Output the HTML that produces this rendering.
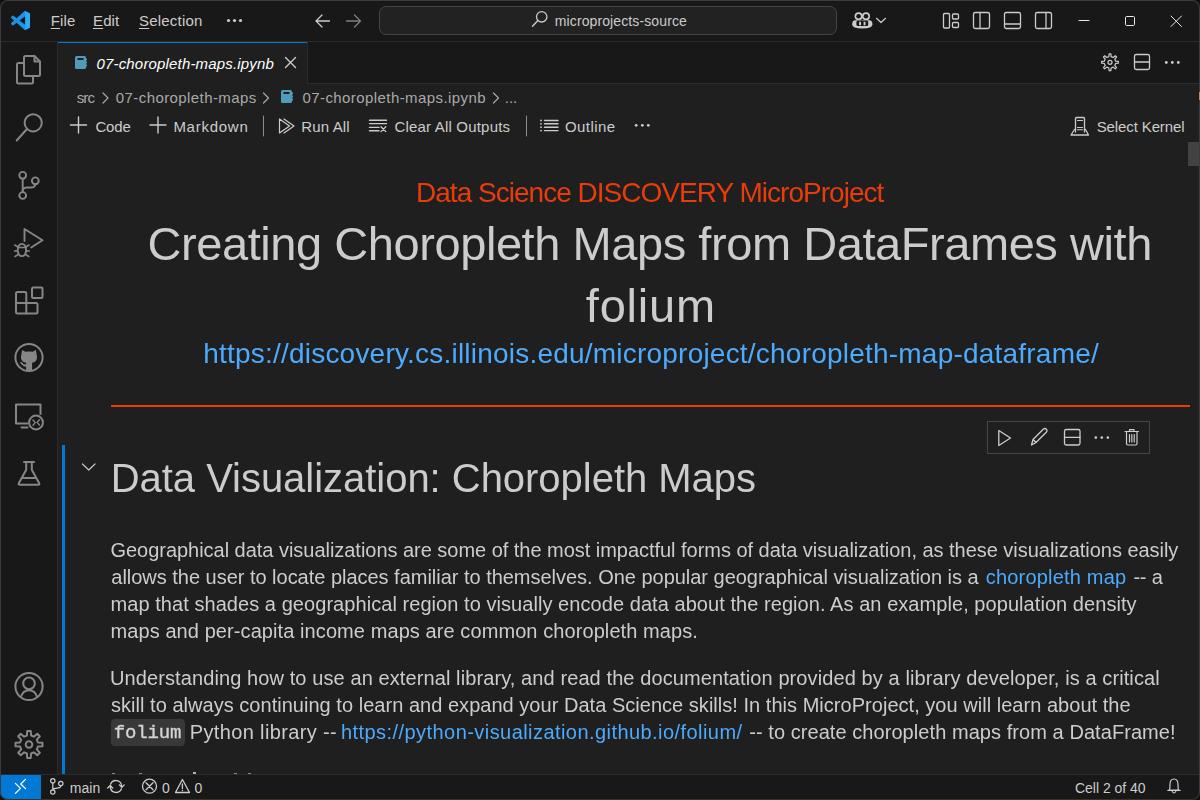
<!DOCTYPE html>
<html><head><meta charset="utf-8">
<style>
html,body{margin:0;padding:0;}
body{width:1200px;height:800px;overflow:hidden;background:#000;position:relative;font-family:"Liberation Sans",sans-serif;}
.t{position:absolute;white-space:nowrap;line-height:1;}
.t u{text-decoration:underline;text-decoration-thickness:1px;text-underline-offset:2px;}
.r{position:absolute;}
</style></head><body>
<div class="r" style="left:0;top:0;width:1200px;height:800px;background:#1f1f1f;"></div>
<!-- title bar -->
<div class="r" style="left:0;top:0;width:1200px;height:41px;background:#181818;"></div>
<div class="r" style="left:0;top:41px;width:1200px;height:1px;background:#2b2b2b;"></div>
<div class="r" style="left:379px;top:6px;width:458px;height:29px;background:#222222;border:1px solid #444444;border-radius:7px;box-sizing:border-box;"></div>
<!-- activity bar -->
<div class="r" style="left:0;top:42px;width:57px;height:732px;background:#181818;"></div>
<div class="r" style="left:57px;top:42px;width:1px;height:732px;background:#2b2b2b;"></div>
<!-- tab bar -->
<div class="r" style="left:58px;top:42px;width:1142px;height:42px;background:#181818;"></div>
<div class="r" style="left:58px;top:42px;width:249px;height:42px;background:#1f1f1f;border-top:1px solid #0078d4;box-sizing:border-box;"></div>
<div class="r" style="left:307px;top:42px;width:1px;height:42px;background:#2b2b2b;"></div>
<div class="r" style="left:308px;top:83px;width:892px;height:1px;background:#2b2b2b;"></div>
<!-- notebook content -->
<div class="r" style="left:58px;top:142px;width:1142px;height:632px;overflow:hidden;will-change:transform;">
<div class="r" style="left:53px;top:263px;width:1079px;height:2px;background:#ee3c00;"></div>
<div class="r" style="left:53px;top:577px;width:74px;height:27px;background:#383838;border-radius:4px;"></div>
<div class="t" style='left:358.00px;top:36.80px;font-size:28px;color:#e83c0a;letter-spacing:-0.980px;'>Data Science DISCOVERY MicroProject</div>
<div class="t" style='left:89.60px;top:78.21px;font-size:47px;color:#cccccc;letter-spacing:-0.437px;'>Creating Choropleth Maps from DataFrames with</div>
<div class="t" style='left:527.80px;top:140.21px;font-size:47px;color:#cccccc;letter-spacing:0.796px;'>folium</div>
<div class="t" style='left:145.20px;top:198.30px;font-size:28px;color:#4daafc;letter-spacing:0.215px;'>https://discovery.cs.illinois.edu/microproject/choropleth-map-dataframe/</div>
<div class="t" style='left:52.70px;top:316.14px;font-size:40px;color:#cccccc;letter-spacing:-0.029px;'>Data Visualization: Choropleth Maps</div>
<div class="t" style='left:52.50px;top:398.07px;font-size:20px;color:#cccccc;letter-spacing:-0.031px;'>Geographical data visualizations are some of the most impactful forms of data visualization, as these visualizations easily</div>
<div class="t" style='left:53.30px;top:425.07px;font-size:20px;color:#cccccc;letter-spacing:-0.020px;'>allows the user to locate places familiar to themselves. One popular geographical visualization is a</div>
<div class="t" style='left:927.70px;top:425.07px;font-size:20px;color:#4daafc;letter-spacing:0.197px;'>choropleth map</div>
<div class="t" style='left:1075.40px;top:425.07px;font-size:20px;color:#cccccc;letter-spacing:-0.192px;'>-- a</div>
<div class="t" style='left:52.50px;top:452.07px;font-size:20px;color:#cccccc;letter-spacing:0.058px;'>map that shades a geographical region to visually encode data about the region. As an example, population density</div>
<div class="t" style='left:52.50px;top:479.07px;font-size:20px;color:#cccccc;letter-spacing:0.084px;'>maps and per-capita income maps are common choropleth maps.</div>
<div class="t" style='left:52.00px;top:526.07px;font-size:20px;color:#cccccc;letter-spacing:0.099px;'>Understanding how to use an external library, and read the documentation provided by a library developer, is a critical</div>
<div class="t" style='left:53.00px;top:553.07px;font-size:20px;color:#cccccc;letter-spacing:0.030px;'>skill to always continuing to learn and expand your Data Science skills! In this MicroProject, you will learn about the</div>
<div class="t" style='left:55.80px;top:582.44px;font-size:19px;color:#d4d4d4;letter-spacing:-0.162px;font-family:"Liberation Mono";-webkit-text-stroke:0.35px #d4d4d4;'>folium</div>
<div class="t" style='left:131.80px;top:580.07px;font-size:20px;color:#cccccc;letter-spacing:0.357px;'>Python library --</div>
<div class="t" style='left:283.00px;top:580.07px;font-size:20px;color:#4daafc;letter-spacing:0.439px;'>https://python-visualization.github.io/folium/</div>
<div class="t" style='left:691.20px;top:580.07px;font-size:20px;color:#cccccc;letter-spacing:0.064px;'>-- to create choropleth maps from a DataFrame!</div>

</div>
<div class="r" style="left:62px;top:445px;width:3px;height:329px;background:#0078d4;"></div>
<div class="r" style="left:987px;top:421px;width:163px;height:33px;border:1px solid #454545;box-sizing:border-box;background:#1f1f1f;"></div>
<div class="r" style="left:1188px;top:142px;width:12px;height:24px;background:#424242;"></div>
<!-- status bar -->
<div class="r" style="left:0;top:774px;width:1200px;height:26px;background:#181818;border-top:1px solid #2b2b2b;box-sizing:border-box;"></div>
<div class="r" style="left:0;top:775px;width:41px;height:25px;background:#0078d4;"></div>
<div class="t" style='left:50.70px;top:13.30px;font-size:15px;color:#cccccc;letter-spacing:0.157px;'><u>F</u>ile</div>
<div class="t" style='left:93.00px;top:13.30px;font-size:15px;color:#cccccc;letter-spacing:0.107px;'><u>E</u>dit</div>
<div class="t" style='left:139.00px;top:13.30px;font-size:15px;color:#cccccc;letter-spacing:0.204px;'><u>S</u>election</div>
<div class="t" style='left:554.80px;top:14.15px;font-size:14px;color:#cccccc;letter-spacing:0.109px;'>microprojects-source</div>
<div class="t" style='left:96.50px;top:55.60px;font-size:15px;color:#ffffff;letter-spacing:0.170px;font-style:italic;'>07-choropleth-maps.ipynb</div>
<div class="t" style='left:76.70px;top:89.60px;font-size:15px;color:#a9a9a9;letter-spacing:-0.898px;'>src</div>
<div class="t" style='left:115.80px;top:89.60px;font-size:15px;color:#a9a9a9;letter-spacing:0.417px;'>07-choropleth-maps</div>
<div class="t" style='left:302.50px;top:89.60px;font-size:15px;color:#a9a9a9;letter-spacing:0.418px;'>07-choropleth-maps.ipynb</div>
<div class="t" style='left:504.80px;top:89.60px;font-size:15px;color:#a9a9a9;letter-spacing:-0.067px;'>...</div>
<div class="t" style='left:95.40px;top:118.80px;font-size:15px;color:#cccccc;letter-spacing:-0.172px;'>Code</div>
<div class="t" style='left:173.40px;top:118.80px;font-size:15px;color:#cccccc;letter-spacing:0.736px;'>Markdown</div>
<div class="t" style='left:301.20px;top:118.80px;font-size:15px;color:#cccccc;letter-spacing:0.163px;'>Run All</div>
<div class="t" style='left:394.40px;top:118.80px;font-size:15px;color:#cccccc;letter-spacing:0.195px;'>Clear All Outputs</div>
<div class="t" style='left:565.00px;top:118.80px;font-size:15px;color:#cccccc;letter-spacing:0.419px;'>Outline</div>
<div class="t" style='left:1096.70px;top:118.80px;font-size:15px;color:#cccccc;letter-spacing:-0.115px;'>Select Kernel</div>
<div class="t" style='left:69.70px;top:780.95px;font-size:14px;color:#cccccc;letter-spacing:0.080px;'>main</div>
<div class="t" style='left:162.00px;top:780.95px;font-size:14px;color:#cccccc;'>0</div>
<div class="t" style='left:194.40px;top:780.95px;font-size:14px;color:#cccccc;'>0</div>
<div class="t" style='left:1075.00px;top:780.65px;font-size:14px;color:#cccccc;letter-spacing:-0.021px;'>Cell 2 of 40</div>

<svg class="r" style="left:0;top:0" width="1200" height="800" viewBox="0 0 1200 800"><g transform="translate(11,11) scale(0.19)"><path fill="#1a93e8" fill-rule="evenodd" d="M70.9 99.3C72.5 99.9 74.3 99.9 75.9 99.1L96.5 89.2C98.6 88.2 100 86 100 83.6V16.4C100 14 98.6 11.8 96.5 10.8L75.9 0.9C73.8-0.1 71.3 0.1 69.5 1.4C69.3 1.6 69 1.8 68.8 2.1L29.4 38L12.2 25C10.6 23.8 8.4 23.9 6.9 25.2L1.4 30.3C-0.5 31.9-0.5 34.8 1.4 36.4L16.2 50L1.4 63.6C-0.5 65.2-0.5 68.1 1.4 69.7L6.9 74.8C8.4 76.1 10.6 76.2 12.2 75L29.4 62L68.8 97.9C69.4 98.5 70.1 99 70.9 99.3ZM75 27.3L45.1 50L75 72.7V27.3Z"/><path fill="#2eaaf5" d="M75.9 0.9L96.5 10.8C98.6 11.8 100 14 100 16.4V83.6C100 86 98.6 88.2 96.5 89.2L75.9 99.1C74.3 99.9 72.5 99.9 70.9 99.3C72.6 99.6 75 98.5 75 96V4C75 1.6 73.9 0.4 72 0.3C73.3 0.2 74.7 0.3 75.9 0.9Z"/></g>
<path d="M322 15 L316 21 L322 27 M316.5 21 H329.5" fill="none" stroke="#cccccc" stroke-width="1.3" stroke-linecap="round" stroke-linejoin="round" />
<path d="M346.5 21 H360 M354.5 15 L360.5 21 L354.5 27" fill="none" stroke="#7d7d7d" stroke-width="1.3" stroke-linecap="round" stroke-linejoin="round" />
<circle cx="541.7" cy="16.8" r="5.2" fill="none" stroke="#cccccc" stroke-width="1.3"/>
<path d="M537.9 20.6 L532.5 26.3" fill="none" stroke="#cccccc" stroke-width="1.4" stroke-linecap="round" stroke-linejoin="round" />
<circle cx="858.6" cy="16.3" r="4.0" fill="#cccccc"/>
<circle cx="866.0" cy="16.3" r="4.0" fill="#cccccc"/>
<circle cx="858.6" cy="16.3" r="2.3" fill="#181818"/>
<circle cx="866.0" cy="16.3" r="2.3" fill="#181818"/>
<path d="M852.2 24.2 Q852.2 20.2 855.2 20.2 H869.4 Q872.4 20.2 872.4 24.2 Q872.4 28.6 862.3 28.6 Q852.2 28.6 852.2 24.2 Z" fill="#cccccc"/>
<rect x="856.4" y="20.6" width="11.8" height="5.4" rx="1.6" fill="#181818"/>
<path d="M859.1 21.8 h1.9 v3.4 h-1.9z M863.6 21.8 h1.9 v3.4 h-1.9z" fill="#cccccc"/>
<path d="M876.5 18.3 L881 22.5 L885.5 18.3" fill="none" stroke="#cccccc" stroke-width="1.2" stroke-linecap="round" stroke-linejoin="round" />
<path d="M944.5 13.5 h4 a1 1 0 0 1 1 1 v12.5 a1 1 0 0 1 -1 1 h-4 a1 1 0 0 1 -1 -1 v-12.5 a1 1 0 0 1 1 -1z" fill="none" stroke="#cccccc" stroke-width="1.3" stroke-linecap="round" stroke-linejoin="round" />
<path d="M953.5 14 h4 a1 1 0 0 1 1 1 v3 a1 1 0 0 1 -1 1 h-4 a1 1 0 0 1 -1 -1 v-3 a1 1 0 0 1 1 -1z" fill="none" stroke="#cccccc" stroke-width="1.3" stroke-linecap="round" stroke-linejoin="round" />
<path d="M953.5 22.5 h4 a1 1 0 0 1 1 1 v3 a1 1 0 0 1 -1 1 h-4 a1 1 0 0 1 -1 -1 v-3 a1 1 0 0 1 1 -1z" fill="none" stroke="#cccccc" stroke-width="1.3" stroke-linecap="round" stroke-linejoin="round" />
<rect x="973.5" y="12.5" width="16" height="16" rx="1.8" fill="none" stroke="#cccccc" stroke-width="1.3"/>
<path d="M980 13 V28" fill="none" stroke="#cccccc" stroke-width="1.3" stroke-linecap="round" stroke-linejoin="round" />
<rect x="1004.5" y="12.5" width="16" height="16" rx="1.8" fill="none" stroke="#cccccc" stroke-width="1.3"/>
<path d="M1005 24 H1020" fill="none" stroke="#cccccc" stroke-width="1.3" stroke-linecap="round" stroke-linejoin="round" />
<rect x="1035.5" y="12.5" width="16" height="16" rx="1.8" fill="none" stroke="#cccccc" stroke-width="1.3"/>
<path d="M1046 13 V28" fill="none" stroke="#cccccc" stroke-width="1.3" stroke-linecap="round" stroke-linejoin="round" />
<path d="M1079 20.5 H1089" fill="none" stroke="#e8e8e8" stroke-width="1" stroke-linecap="round" stroke-linejoin="round" stroke-linecap="butt"/>
<rect x="1125.5" y="16.5" width="9" height="9" rx="1.2" fill="none" stroke="#e8e8e8" stroke-width="1"/>
<path d="M1171 16 L1181.5 26.5 M1181.5 16 L1171 26.5" fill="none" stroke="#e8e8e8" stroke-width="1" stroke-linecap="round" stroke-linejoin="round" stroke-linecap="butt"/>
<path d="M25.5 56 H34.5 L40 61.5 V74.5 Q40 76 38.5 76 H25.5 Q24 76 24 74.5 V57.5 Q24 56 25.5 56 Z" fill="none" stroke="#868686" stroke-width="2" stroke-linecap="round" stroke-linejoin="round" />
<path d="M34.5 56.5 V61.5 H39.5" fill="none" stroke="#868686" stroke-width="2" stroke-linecap="round" stroke-linejoin="round" />
<path d="M24 63 H18.5 Q17 63 17 64.5 V82 Q17 83.5 18.5 83.5 H31.5 Q33 83.5 33 82 V76" fill="none" stroke="#868686" stroke-width="2" stroke-linecap="round" stroke-linejoin="round" />
<circle cx="33.2" cy="122.8" r="8.6" fill="none" stroke="#868686" stroke-width="2"/>
<path d="M27 129 L16.7 140.5" fill="none" stroke="#868686" stroke-width="2" stroke-linecap="round" stroke-linejoin="round" />
<circle cx="22.7" cy="175.3" r="3.4" fill="none" stroke="#868686" stroke-width="1.9"/>
<circle cx="22.7" cy="195.5" r="3.4" fill="none" stroke="#868686" stroke-width="1.9"/>
<circle cx="35.3" cy="180.8" r="3.4" fill="none" stroke="#868686" stroke-width="1.9"/>
<path d="M22.7 178.8 V192" fill="none" stroke="#868686" stroke-width="1.9" stroke-linecap="round" stroke-linejoin="round" />
<path d="M35.3 184.3 Q35 187.5 31 187.5 H26.5 Q22.7 187.8 22.7 191" fill="none" stroke="#868686" stroke-width="1.9" stroke-linecap="round" stroke-linejoin="round" />
<path d="M24.5 241 V229 L42.5 240.2 L31.2 247.5" fill="none" stroke="#868686" stroke-width="1.9" stroke-linecap="round" stroke-linejoin="round" />
<ellipse cx="21.9" cy="250" rx="4.2" ry="6.2" fill="none" stroke="#868686" stroke-width="1.8"/>
<path d="M17.8 247.5 H26" fill="none" stroke="#868686" stroke-width="1.6" stroke-linecap="round" stroke-linejoin="round" />
<path d="M14.8 245 L18 247 M14.5 251 H17.7 M15 256.5 L18.2 254.5 M29 245 L25.8 247 M29.3 251 H26.1 M28.8 256.5 L25.6 254.5" fill="none" stroke="#868686" stroke-width="1.5" stroke-linecap="round" stroke-linejoin="round" />
<rect x="32" y="287.5" width="10.5" height="10.5" rx="1.2" fill="none" stroke="#868686" stroke-width="2"/>
<path d="M26.3 303 V293.5 Q26.3 292 24.8 292 H17.5 Q16 292 16 293.5 V312 Q16 313.5 17.5 313.5 H36 Q37.5 313.5 37.5 312 V304.5 Q37.5 303 36 303 H16" fill="none" stroke="#868686" stroke-width="2" stroke-linecap="round" stroke-linejoin="round" />
<path d="M26.3 303 V313.5" fill="none" stroke="#868686" stroke-width="2" stroke-linecap="round" stroke-linejoin="round" />
<circle cx="29" cy="357.5" r="13.6" fill="none" stroke="#868686" stroke-width="2"/>
<path d="M22.2 349.9 L25.3 351.8 Q29 351 32.7 351.8 L35.8 349.9 Q36.6 352.5 36.5 354.5 Q37.3 356 37 358 Q36.5 362 32.1 362.8 V370 H26.1 V366.8 Q22.5 366.6 20 362.5 L21.2 361.8 Q23 364.6 26.1 364.5 V362.8 Q21.5 362 21 358 Q20.7 356 21.5 354.5 Q21.4 352.5 22.2 349.9 Z" fill="#868686"/>
<path d="M27.5 423.5 H16 V404.5 H40.5 V414" fill="none" stroke="#868686" stroke-width="2" stroke-linecap="round" stroke-linejoin="round" stroke-linecap="butt" stroke-linejoin="miter"/>
<path d="M21.5 427.5 H27.5" fill="none" stroke="#868686" stroke-width="2" stroke-linecap="round" stroke-linejoin="round" stroke-linecap="butt"/>
<circle cx="36" cy="422.5" r="6.9" fill="none" stroke="#868686" stroke-width="2"/>
<path d="M33 420 L35.3 422.6 L33 425.2 M39.4 419.8 L37.1 422.4 L39.4 425" fill="none" stroke="#868686" stroke-width="1.4" stroke-linecap="round" stroke-linejoin="round" />
<path d="M24 462 H34" fill="none" stroke="#868686" stroke-width="2" stroke-linecap="round" stroke-linejoin="round" />
<path d="M26.2 462 V469.8 L18.8 483.3 Q18.2 484.8 19.8 484.8 H38.2 Q39.8 484.8 39.2 483.3 L31.8 469.8 V462" fill="none" stroke="#868686" stroke-width="2" stroke-linecap="round" stroke-linejoin="round" />
<path d="M22.5 478 H35.5" fill="none" stroke="#868686" stroke-width="2" stroke-linecap="round" stroke-linejoin="round" />
<circle cx="29" cy="686.5" r="13.6" fill="none" stroke="#868686" stroke-width="2"/>
<circle cx="29" cy="683.4" r="5.8" fill="none" stroke="#868686" stroke-width="2"/>
<path d="M20.8 697 Q23 690.2 29 690.2 Q35 690.2 37.2 697" fill="none" stroke="#868686" stroke-width="2" stroke-linecap="round" stroke-linejoin="round" />
<path d="M27.21 731.02 L30.79 731.02 L31.08 735.54 L33.87 736.69 L37.27 733.70 L39.80 736.23 L36.81 739.63 L37.96 742.42 L42.48 742.71 L42.48 746.29 L37.96 746.58 L36.81 749.37 L39.80 752.77 L37.27 755.30 L33.87 752.31 L31.08 753.46 L30.79 757.98 L27.21 757.98 L26.92 753.46 L24.13 752.31 L20.73 755.30 L18.20 752.77 L21.19 749.37 L20.04 746.58 L15.52 746.29 L15.52 742.71 L20.04 742.42 L21.19 739.63 L18.20 736.23 L20.73 733.70 L24.13 736.69 L26.92 735.54 Z" fill="none" stroke="#868686" stroke-width="2" stroke-linecap="round" stroke-linejoin="round" />
<circle cx="29" cy="744.5" r="3.3" fill="none" stroke="#868686" stroke-width="2"/>
<rect x="75" y="56" width="11" height="13" rx="1.6" fill="#519aba"/>
<rect x="77.5" y="58" width="6" height="2" fill="#1f1f1f"/>
<path d="M86.5 58.5 v2 M86.5 61.5 v2 M86.5 64.5 v2" stroke="#519aba" stroke-width="1"/>
<path d="M285.5 57.5 L295.5 67.5 M295.5 57.5 L285.5 67.5" fill="none" stroke="#cccccc" stroke-width="1.4" stroke-linecap="round" stroke-linejoin="round" />
<path d="M1109.10 53.95 L1110.90 53.95 L1111.13 56.61 L1113.22 57.48 L1115.27 55.76 L1116.54 57.03 L1114.82 59.08 L1115.69 61.17 L1118.35 61.40 L1118.35 63.20 L1115.69 63.43 L1114.82 65.52 L1116.54 67.57 L1115.27 68.84 L1113.22 67.12 L1111.13 67.99 L1110.90 70.65 L1109.10 70.65 L1108.87 67.99 L1106.78 67.12 L1104.73 68.84 L1103.46 67.57 L1105.18 65.52 L1104.31 63.43 L1101.65 63.20 L1101.65 61.40 L1104.31 61.17 L1105.18 59.08 L1103.46 57.03 L1104.73 55.76 L1106.78 57.48 L1108.87 56.61 Z" fill="none" stroke="#cccccc" stroke-width="1.2" stroke-linecap="round" stroke-linejoin="round" />
<circle cx="1110" cy="62.3" r="2.0" fill="none" stroke="#cccccc" stroke-width="1.2"/>
<rect x="1134.5" y="54.5" width="15" height="15" rx="1.8" fill="none" stroke="#cccccc" stroke-width="1.3"/>
<path d="M1135 62 H1149.5" fill="none" stroke="#cccccc" stroke-width="1.3" stroke-linecap="round" stroke-linejoin="round" />
<circle cx="1166.3" cy="62.5" r="1.4" fill="#cccccc"/>
<circle cx="1172.3" cy="62.5" r="1.4" fill="#cccccc"/>
<circle cx="1178.3" cy="62.5" r="1.4" fill="#cccccc"/>
<path d="M103 93 L108 98 L103 103" fill="none" stroke="#a9a9a9" stroke-width="1.2" stroke-linecap="round" stroke-linejoin="round" />
<path d="M263.5 93 L268.5 98 L263.5 103" fill="none" stroke="#a9a9a9" stroke-width="1.2" stroke-linecap="round" stroke-linejoin="round" />
<rect x="281" y="90" width="11" height="13" rx="1.6" fill="#519aba"/>
<rect x="283.5" y="92" width="6" height="2" fill="#1f1f1f"/>
<path d="M292.5 92.5 v2 M292.5 95.5 v2 M292.5 98.5 v2" stroke="#519aba" stroke-width="1"/>
<path d="M493.5 93 L498.5 98 L493.5 103" fill="none" stroke="#a9a9a9" stroke-width="1.2" stroke-linecap="round" stroke-linejoin="round" />
<path d="M70.5 125 H86.5 M78.5 117 V133" fill="none" stroke="#cccccc" stroke-width="1.4" stroke-linecap="round" stroke-linejoin="round" />
<path d="M150 125 H166 M158 117 V133" fill="none" stroke="#cccccc" stroke-width="1.4" stroke-linecap="round" stroke-linejoin="round" />
<path d="M263.5 116 V136" fill="none" stroke="#8c8c8c" stroke-width="1" stroke-linecap="round" stroke-linejoin="round" />
<path d="M526.5 116 V136" fill="none" stroke="#8c8c8c" stroke-width="1" stroke-linecap="round" stroke-linejoin="round" />
<path d="M279.5 119 V133 L289.5 126 Z M284 119 L294 126 L284 133" fill="none" stroke="#cccccc" stroke-width="1.2" stroke-linecap="round" stroke-linejoin="round" />
<path d="M369.5 120.2 H386.5 M369.5 123.6 H386.5 M369.5 127.4 H379 M369.5 130.8 H379" fill="none" stroke="#cccccc" stroke-width="1.4" stroke-linecap="round" stroke-linejoin="round" stroke-linecap="butt"/>
<path d="M381 126.8 L385.8 131.6 M385.8 126.8 L381 131.6" fill="none" stroke="#cccccc" stroke-width="1.3" stroke-linecap="round" stroke-linejoin="round" />
<circle cx="541" cy="120.5" r="0.9" fill="#cccccc"/>
<circle cx="541" cy="123.8" r="0.9" fill="#cccccc"/>
<circle cx="541" cy="127.2" r="0.9" fill="#cccccc"/>
<circle cx="541" cy="130.6" r="0.9" fill="#cccccc"/>
<path d="M544.5 120.5 H558 M544.5 123.8 H558 M544.5 127.2 H558 M544.5 130.6 H558" fill="none" stroke="#cccccc" stroke-width="1.4" stroke-linecap="round" stroke-linejoin="round" stroke-linecap="butt"/>
<circle cx="636.2" cy="125.3" r="1.4" fill="#cccccc"/>
<circle cx="642.3" cy="125.3" r="1.4" fill="#cccccc"/>
<circle cx="648.3" cy="125.3" r="1.4" fill="#cccccc"/>
<path d="M1075.5 132 V118.5 Q1075.5 117.5 1076.5 117.5 H1083.5 Q1084.5 117.5 1084.5 118.5 V132" fill="none" stroke="#cccccc" stroke-width="1.3" stroke-linecap="round" stroke-linejoin="round" />
<path d="M1077.5 120.5 H1082.5 M1077.5 127.5 H1082.5 M1077.5 129.8 H1082.5" fill="none" stroke="#cccccc" stroke-width="1.1" stroke-linecap="round" stroke-linejoin="round" />
<path d="M1074.5 129.5 L1071 135 H1088.5 L1085.5 129.5" fill="none" stroke="#cccccc" stroke-width="1.3" stroke-linecap="round" stroke-linejoin="round" />
<path d="M998.8 430.5 V445.5 L1010.5 438 Z" fill="none" stroke="#cccccc" stroke-width="1.3" stroke-linecap="round" stroke-linejoin="round" />
<path d="M1031.5 445 L1033 439.5 L1043.5 429 Q1045 427.8 1046.5 429.3 Q1047.7 430.8 1046.5 432 L1036 442.5 Z M1033 439.5 L1036 442.5" fill="none" stroke="#cccccc" stroke-width="1.3" stroke-linecap="round" stroke-linejoin="round" />
<rect x="1064.5" y="429.5" width="15.5" height="15.5" rx="1.8" fill="none" stroke="#cccccc" stroke-width="1.3"/>
<path d="M1065 437.3 H1080" fill="none" stroke="#cccccc" stroke-width="1.3" stroke-linecap="round" stroke-linejoin="round" />
<circle cx="1095.8" cy="437.6" r="1.3" fill="#cccccc"/>
<circle cx="1101.8" cy="437.6" r="1.3" fill="#cccccc"/>
<circle cx="1107.8" cy="437.6" r="1.3" fill="#cccccc"/>
<path d="M1125 431.5 H1138.5 M1129.5 431.5 V429.7 H1134 V431.5 M1126.5 432 V443.5 Q1126.5 445 1128 445 H1135.5 Q1137 445 1137 443.5 V432 M1129.5 434.5 V442 M1131.8 434.5 V442 M1134.2 434.5 V442" fill="none" stroke="#cccccc" stroke-width="1.2" stroke-linecap="round" stroke-linejoin="round" />
<path d="M82.5 464 L88.8 470 L95 464" fill="none" stroke="#c5c5c5" stroke-width="1.2" stroke-linecap="round" stroke-linejoin="round" />
<path d="M15.4 783.4 L20.5 788.4 L15.4 793.4 M25.5 779.4 L20.8 784 L25.5 788.6" fill="none" stroke="#ffffff" stroke-width="1.3" stroke-linecap="round" stroke-linejoin="round" />
<circle cx="52.8" cy="780.8" r="2.2" fill="none" stroke="#cccccc" stroke-width="1.2"/>
<circle cx="52.8" cy="792" r="2.2" fill="none" stroke="#cccccc" stroke-width="1.2"/>
<circle cx="60.8" cy="783.5" r="2.2" fill="none" stroke="#cccccc" stroke-width="1.2"/>
<path d="M52.8 783 V789.8 M60.8 785.7 Q60.8 787.5 58.5 787.8 L55.5 788.3 Q52.8 788.8 52.8 790" fill="none" stroke="#cccccc" stroke-width="1.2" stroke-linecap="round" stroke-linejoin="round" />
<path d="M110.6 784.2 A5.7 5.7 0 0 1 121.6 785.6 M119.3 784.9 L121.8 787.4 L124.3 784.9" fill="none" stroke="#cccccc" stroke-width="1.3" stroke-linecap="round" stroke-linejoin="round" />
<path d="M121.4 788.8 A5.7 5.7 0 0 1 110.4 787.4 M112.7 788 L110.2 785.5 L107.7 788" fill="none" stroke="#cccccc" stroke-width="1.3" stroke-linecap="round" stroke-linejoin="round" />
<circle cx="149.5" cy="786.2" r="7" fill="none" stroke="#cccccc" stroke-width="1.3"/>
<path d="M146 782.7 L153 789.7 M153 782.7 L146 789.7" fill="none" stroke="#cccccc" stroke-width="1.3" stroke-linecap="round" stroke-linejoin="round" />
<path d="M182.4 779.5 L175.5 792.5 H189.5 Z" fill="none" stroke="#cccccc" stroke-width="1.3" stroke-linecap="round" stroke-linejoin="round" stroke-linejoin="miter"/>
<path d="M182.4 784 V788.5" fill="none" stroke="#cccccc" stroke-width="1.3" stroke-linecap="round" stroke-linejoin="round" />
<circle cx="182.4" cy="790.5" r="0.8" fill="#cccccc"/>
<path d="M1169.5 790 Q1170 788.5 1170 784.5 Q1170 779 1174 779 Q1178 779 1178 784.5 Q1178 788.5 1178.5 790 Z M1167.8 790.3 H1180.2 M1172.2 791.5 Q1174 794.5 1175.8 791.5" fill="none" stroke="#cccccc" stroke-width="1.2" stroke-linecap="round" stroke-linejoin="round" />
<rect x="112" y="773" width="3" height="1" fill="#8a8a8a"/>
<rect x="139" y="773" width="3" height="1" fill="#8a8a8a"/>
<rect x="193" y="772" width="3" height="2" fill="#b0b0b0"/>
<rect x="234" y="773" width="3" height="1" fill="#8a8a8a"/>
<rect x="248" y="773" width="3" height="1" fill="#8a8a8a"/>
<circle cx="228.5" cy="20.5" r="1.6" fill="#cccccc"/>
<circle cx="234.5" cy="20.5" r="1.6" fill="#cccccc"/>
<circle cx="240.5" cy="20.5" r="1.6" fill="#cccccc"/></svg>
<!-- window frame -->
<div class="r" style="left:0;top:0;width:1200px;height:800px;box-sizing:border-box;border:1px solid #3c3c3c;border-bottom-color:#3a3326;border-radius:8px;box-shadow:0 0 0 4px #111;"></div>
<div class="r" style="left:1199px;top:92px;width:1px;height:8px;background:#c08a5a;"></div>
</body></html>
